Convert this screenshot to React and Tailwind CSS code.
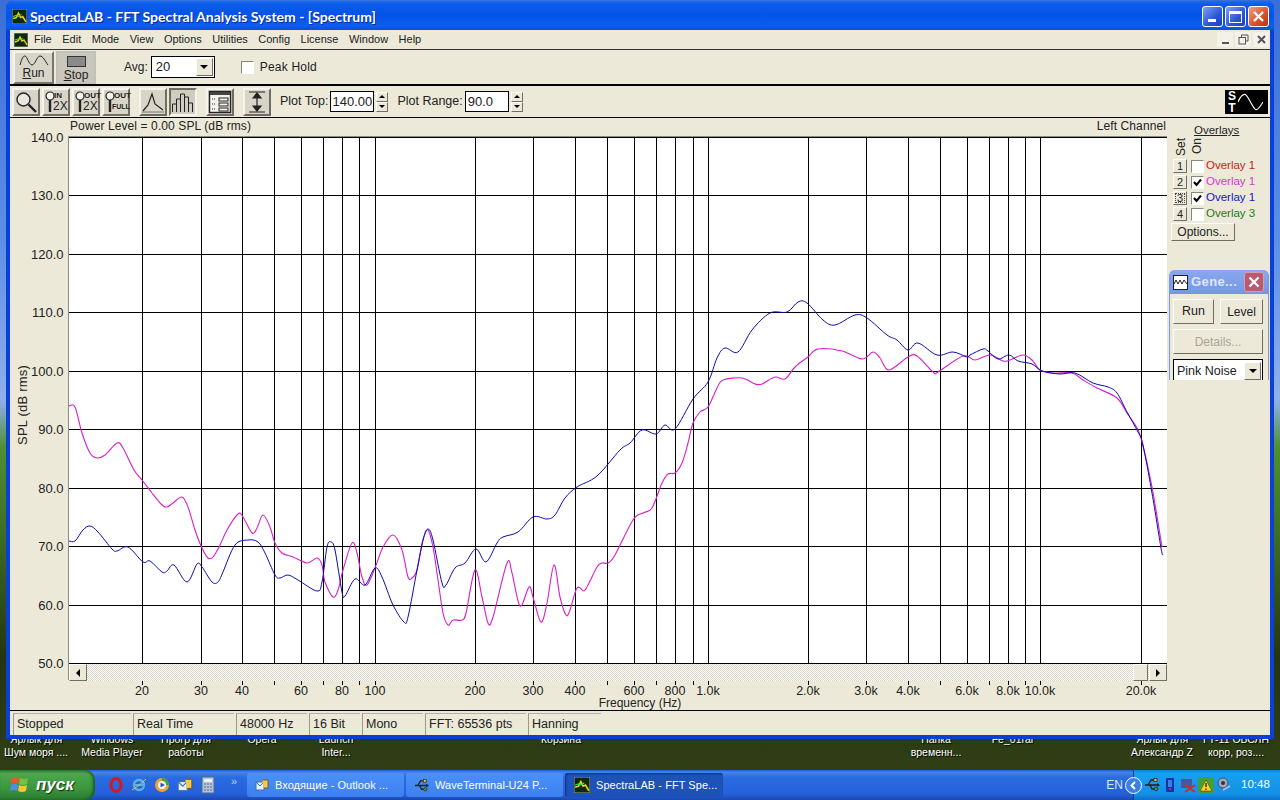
import React from "react";

const raised = "border border-t-white border-l-white border-r-[#716f64] border-b-[#716f64] bg-[#ece9d8]";
const toolBtn = "flex items-center justify-center w-[28px] h-[28px] border-2 border-t-[#f5f4ec] border-l-[#f5f4ec] border-r-[#6f6d62] border-b-[#6f6d62] bg-[#d8d5c8]";
const sunken = "border border-t-[#8a877a] border-l-[#8a877a] border-r-white border-b-white";

const magenta = [[69,406],[75,407],[82,433],[90,453],[97,458],[105,455],[117,443],[123,448],[134,470],[142,480],[152,493],[162,505],[167,507],[173,503],[182,497],[188,507],[195,530],[202,548],[208,558],[213,557],[220,545],[227,530],[238,514],[243,517],[252,533],[257,528],[263,515],[270,527],[275,543],[282,553],[293,557],[307,563],[317,558],[322,565],[325,582],[333,597],[338,590],[343,570],[352,543],[357,553],[362,577],[367,585],[375,568],[383,547],[393,535],[402,550],[408,577],[412,578],[417,570],[423,540],[428,530],[433,547],[438,580],[443,613],[448,625],[453,620],[462,620],[466,613],[475,570],[482,597],[488,623],[493,617],[507,563],[512,573],[520,606],[529,587],[533,597],[541,622],[547,603],[554,565],[560,597],[566,615],[570,610],[577,588],[584,591],[588,585],[597,567],[602,563],[608,563],[615,555],[633,520],[643,513],[652,508],[662,483],[668,474],[675,473],[682,463],[688,443],[693,423],[700,412],[708,407],[717,388],[723,380],[742,378],[755,384],[762,384],[775,377],[785,379],[795,367],[808,357],[818,349],[842,351],[862,359],[873,352],[880,358],[889,370],[908,357],[917,356],[933,372],[938,372],[963,356],[975,360],[990,355],[1003,361],[1010,360],[1023,355],[1032,360],[1040,370],[1053,373],[1072,373],[1083,380],[1097,388],[1117,398],[1127,413],[1137,428],[1142,442],[1152,487],[1162,547]];

const blue = [[69,541],[75,541],[83,530],[90,526],[98,532],[112,549],[117,551],[128,547],[143,562],[150,561],[162,572],[167,571],[174,565],[187,582],[197,564],[202,567],[212,582],[218,582],[223,572],[235,545],[248,540],[258,542],[265,553],[275,575],[280,578],[288,575],[298,580],[317,591],[322,582],[327,547],[331,542],[335,550],[342,592],[345,596],[355,579],[365,585],[375,568],[382,577],[393,605],[404,622],[408,617],[417,570],[423,540],[428,529],[433,540],[442,583],[446,585],[455,568],[465,563],[476,549],[486,562],[497,543],[503,537],[518,532],[533,517],[547,519],[555,515],[565,498],[577,487],[597,476],[620,450],[630,443],[642,430],[656,434],[665,425],[675,429],[693,399],[708,382],[717,358],[725,348],[738,352],[752,330],[770,313],[787,312],[798,302],[807,303],[823,320],[835,325],[855,315],[867,318],[887,335],[897,340],[908,350],[918,343],[937,355],[953,352],[967,357],[970,355],[983,349],[988,351],[998,359],[1009,355],[1018,361],[1032,364],[1042,371],[1060,374],[1075,373],[1093,383],[1108,387],[1117,393],[1127,412],[1138,432],[1143,445],[1152,493],[1161,548],[1163,555]];

const gridX = [142,201,242,274,301,323,342,359,375,475,533,575,607,634,656,675,693,708,808,866,908,940,967,989,1008,1025,1040,1141];
const gridY = [137,195,254,312,371,429,488,546,605,663];
const yLabels = ["140.0","130.0","120.0","110.0","100.0","90.0","80.0","70.0","60.0","50.0"];
const xLabels = [[142,"20"],[201,"30"],[242,"40"],[301,"60"],[342,"80"],[375,"100"],[475,"200"],[533,"300"],[575,"400"],[634,"600"],[675,"800"],[708,"1.0k"],[808,"2.0k"],[866,"3.0k"],[908,"4.0k"],[967,"6.0k"],[1008,"8.0k"],[1040,"10.0k"],[1141,"20.0k"]];

const smooth = (pts) => {
  let d = `M${pts[0][0]} ${pts[0][1]}`;
  for (let i = 0; i < pts.length - 1; i++) {
    const p0 = pts[i - 1] || pts[i];
    const p1 = pts[i];
    const p2 = pts[i + 1];
    const p3 = pts[i + 2] || p2;
    const c1x = p1[0] + (p2[0] - p0[0]) / 6;
    const c1y = p1[1] + (p2[1] - p0[1]) / 6;
    const c2x = p2[0] - (p3[0] - p1[0]) / 6;
    const c2y = p2[1] - (p3[1] - p1[1]) / 6;
    d += ` C${c1x.toFixed(1)} ${c1y.toFixed(1)} ${c2x.toFixed(1)} ${c2y.toFixed(1)} ${p2[0]} ${p2[1]}`;
  }
  return d;
};

const AppIcon = ({ size = 14 }) => (
  <svg width={size} height={size} viewBox="0 0 14 14" className="shrink-0">
    <rect width="14" height="14" fill="#0c2a12" stroke="#8a9a80" />
    <path d="M1 9 L4 8 L6 4 L8 8 L10 7 L13 12" fill="none" stroke="#f0d020" strokeWidth="1.4" />
    <path d="M1 7 L4 6 L6 7 L9 5" fill="none" stroke="#30e050" strokeWidth="1" />
  </svg>
);

const TitleButtons = () => (
  <div className="flex items-center gap-[2px] pr-[5px]">
    <div className="w-[21px] h-[21px] rounded-[3px] border border-white bg-[linear-gradient(135deg,#7ea4f4,#2a55d8_60%,#1c3fc0)] flex items-end pl-[5px] pb-[4px]">
      <div className="w-[8px] h-[3px] bg-white" />
    </div>
    <div className="w-[21px] h-[21px] rounded-[3px] border border-white bg-[linear-gradient(135deg,#7ea4f4,#2a55d8_60%,#1c3fc0)] flex items-center justify-center">
      <div className="w-[13px] h-[12px] border border-white border-t-[3px]" />
    </div>
    <div className="w-[21px] h-[21px] rounded-[3px] border border-white bg-[linear-gradient(135deg,#f0a080,#d8502a_60%,#b83010)] flex items-center justify-center">
      <svg width="13" height="13" viewBox="0 0 13 13"><path d="M2 2 L11 11 M11 2 L2 11" stroke="#fff" strokeWidth="2.4" /></svg>
    </div>
  </div>
);

const Magnifier = () => (
  <svg width="24" height="24" viewBox="0 0 24 24" fill="none">
    <circle cx="9.5" cy="9.5" r="6.5" stroke="#222" strokeWidth="1.4" fill="#e8e8e0" />
    <path d="M14.5 14.5 L22 22" stroke="#222" strokeWidth="2.4" />
  </svg>
);

const ZoomIcon = ({ top, bottom }) => (
  <div className="relative w-[24px] h-[24px]">
    <svg width="24" height="24" viewBox="0 0 24 24" fill="none" className="absolute left-0 top-0">
      <circle cx="6" cy="6" r="4" stroke="#222" strokeWidth="1.2" fill="#f4f4ec" />
      <path d="M6 10 L6 22" stroke="#222" strokeWidth="2.4" />
    </svg>
    <span className="absolute left-[10px] top-[1px] text-[8px] leading-[9px] font-bold text-[#222]">{top}</span>
    <span className={bottom === "FULL" ? "absolute left-[8px] top-[12px] text-[7px] leading-[10px] font-bold text-[#222]" : "absolute left-[9px] top-[10px] text-[12px] leading-[13px] text-[#222]"}>{bottom}</span>
  </div>
);

const PeakIcon = () => (
  <svg width="22" height="22" viewBox="0 0 22 22" fill="none">
    <path d="M1 20 L6 14 L10 3 L13 13 L21 19" stroke="#222" strokeWidth="1.2" />
    <path d="M0 21 H22" stroke="#777" />
  </svg>
);

const BarsIcon = () => (
  <svg width="24" height="22" viewBox="0 0 24 22" fill="none" stroke="#222" strokeWidth="1">
    <path d="M1.5 21 V13 H5.5 V21 M5.5 21 V8 H9.5 V21 M9.5 21 V3 H13.5 V21 M13.5 21 V6 H17.5 V21 M17.5 21 V12 H21.5 V21" />
  </svg>
);

const PanelIcon = () => (
  <svg width="24" height="24" viewBox="0 0 24 24" fill="none" stroke="#222">
    <rect x="1.5" y="1.5" width="21" height="21" fill="#f4f4ec" strokeWidth="1.4" />
    <rect x="2" y="2" width="20" height="3" fill="#444" stroke="none" />
    <rect x="11" y="8" width="9" height="3" />
    <rect x="11" y="13" width="9" height="3" />
    <rect x="11" y="18" width="9" height="3" />
    <path d="M4 9 H8 M4 14 H8 M4 19 H8" strokeDasharray="1 1" />
  </svg>
);

const RangeIcon = () => (
  <svg width="24" height="24" viewBox="0 0 24 24" fill="none" stroke="#222" strokeWidth="1.2">
    <path d="M4 2 H20 M4 22 H20 M12 3 V21" />
    <path d="M8 8 L12 3 L16 8 Z M8 16 L12 21 L16 16 Z" fill="#222" />
  </svg>
);

const Spinner = () => (
  <div className="flex flex-col w-[12px] h-[20px]">
    <div className={`${raised} flex-1 flex items-center justify-center`}><div className="border-x-[3px] border-x-transparent border-b-[3px] border-b-black" /></div>
    <div className={`${raised} flex-1 flex items-center justify-center`}><div className="border-x-[3px] border-x-transparent border-t-[3px] border-t-black" /></div>
  </div>
);

const DropBtn = ({ h = "h-[18px]" }) => (
  <div className={`${raised} ${h} w-[17px] flex items-center justify-center shrink-0`}>
    <div className="border-x-[4px] border-x-transparent border-t-[4px] border-t-black" />
  </div>
);

const Check = ({ checked }) => (
  <div className={`w-[13px] h-[13px] bg-white ${sunken} flex items-center justify-center`}>
    {checked && <svg width="9" height="9" viewBox="0 0 9 9"><path d="M1 4 L3.5 7 L8 1.5" fill="none" stroke="#000" strokeWidth="2" /></svg>}
  </div>
);

const Chart = () => (
  <svg width="1158" height="574" className="block overflow-visible">
    <g transform="translate(-10,-136)" fontFamily="'Liberation Sans', Arial, sans-serif" fontSize="13" fill="#222">
      <rect x="69" y="137" width="1098" height="526" fill="#fff" />
      <path d="M68.5 137 V680 M68 136.5 H1167" stroke="#8e8c80" strokeWidth="1.5" shapeRendering="crispEdges" />
      {gridX.map((x) => (
        <line key={x} x1={x + 0.5} x2={x + 0.5} y1="137" y2="663" stroke="#000" shapeRendering="crispEdges" />
      ))}
      {gridY.map((y) => (
        <line key={y} x1="69" x2="1167" y1={y + 0.5} y2={y + 0.5} stroke="#000" shapeRendering="crispEdges" />
      ))}
      {gridX.map((x) => (
        <line key={x} x1={x + 0.5} x2={x + 0.5} y1="680" y2="685" stroke="#000" shapeRendering="crispEdges" />
      ))}
      <path d={smooth(magenta)} fill="none" stroke="#d81fc8" strokeWidth="1.1" />
      <path d={smooth(blue)} fill="none" stroke="#0a0ab0" strokeWidth="1" />
      {yLabels.map((t, i) => (
        <text key={t} x="63.5" y={gridY[i] + 5} textAnchor="end">{t}</text>
      ))}
      {xLabels.map(([x, t]) => (
        <text key={t} x={x} y="695" textAnchor="middle" fontSize="12.5">{t}</text>
      ))}
      <text x="640" y="707" textAnchor="middle" fontSize="12">Frequency (Hz)</text>
      <text transform="translate(27,405) rotate(-90)" textAnchor="middle" letterSpacing="0.2">SPL (dB rms)</text>
    </g>
  </svg>
);

const Status = ({ w, children }) => (
  <div className={`${w} h-[22px] border-l border-t border-l-[#9c998a] border-t-[#b4b1a2] pl-[3px] text-[12.5px] leading-[20px] text-[#222] truncate`}>{children}</div>
);

const DesktopLabel = ({ left, top, children }) => (
  <div className="absolute -translate-x-1/2 text-[10.5px] leading-[14px] text-white whitespace-nowrap [text-shadow:1px_1px_1px_#000]" style={{ left, top }}>{children}</div>
);

const TaskBtn = ({ active, icon, children }) => (
  <div className={active
    ? "w-[158px] h-[24px] rounded-[3px] bg-[#1e52b7] shadow-[inset_1px_1px_2px_#0f2f80] flex items-center gap-[6px] pl-[9px] text-[11px] tracking-[0.05px] text-white whitespace-nowrap"
    : "w-[157px] h-[24px] rounded-[3px] bg-[linear-gradient(#4a90f8,#3c80f0)] flex items-center gap-[6px] pl-[8px] text-[11px] tracking-[0.05px] text-white whitespace-nowrap"}>
    {icon}
    <span>{children}</span>
  </div>
);

const MailIcon = ({ size = 14 }) => (
  <svg width={size} height={size} viewBox="0 0 14 14">
    <rect x="1" y="4" width="8" height="8" fill="#e8f0fa" stroke="#4070b0" />
    <path d="M1 4 L5 8 L9 4" fill="none" stroke="#4070b0" />
    <path d="M7 2 H13 V10 H9" fill="#f4c84a" stroke="#705010" strokeWidth=".8" />
  </svg>
);

const UsbIcon = ({ size = 16 }) => (
  <svg width={size} height={size} viewBox="0 0 16 16" fill="none">
    <path d="M1 8 H14" stroke="#222" strokeWidth="1.6" />
    <path d="M4 8 L7 3 H10 M6 8 L8 12 H11" stroke="#222" strokeWidth="1.4" />
    <rect x="10" y="1.5" width="3" height="3" fill="#e8c030" stroke="#222" strokeWidth=".7" />
    <circle cx="12" cy="12" r="1.8" fill="#30a040" stroke="#222" strokeWidth=".7" />
    <path d="M13 6 L16 8 L13 10 Z" fill="#222" />
  </svg>
);

const App = () => {
  return (
    <div className="relative w-[1280px] h-[800px] overflow-hidden font-['Liberation_Sans',Arial,sans-serif] bg-[linear-gradient(#3a6ed8_0%,#5d8fe6_30%,#8fb0ea_50%,#4f8f30_56%,#3b6a22_68%,#25350f_82%,#2f3e15_96%)]">
      {/* desktop icons, mostly hidden by the window */}
      <DesktopLabel left={36} top={732}>Ярлык для</DesktopLabel>
      <DesktopLabel left={36} top={745}>Шум моря ....</DesktopLabel>
      <DesktopLabel left={112} top={732}>Windows</DesktopLabel>
      <DesktopLabel left={112} top={745}>Media Player</DesktopLabel>
      <DesktopLabel left={186} top={732}>Прогр для</DesktopLabel>
      <DesktopLabel left={186} top={745}>работы</DesktopLabel>
      <DesktopLabel left={262} top={732}>Opera</DesktopLabel>
      <DesktopLabel left={336} top={732}>Launch</DesktopLabel>
      <DesktopLabel left={336} top={745}>Inter...</DesktopLabel>
      <DesktopLabel left={561} top={732}>Корзина</DesktopLabel>
      <DesktopLabel left={936} top={732}>Папка</DesktopLabel>
      <DesktopLabel left={936} top={745}>временн...</DesktopLabel>
      <DesktopLabel left={1013} top={732}>Fe_01rar</DesktopLabel>
      <DesktopLabel left={1162} top={732}>Ярлык для</DesktopLabel>
      <DesktopLabel left={1162} top={745}>Александр Z</DesktopLabel>
      <DesktopLabel left={1236} top={732}>ГТ-11 ОБСЛН</DesktopLabel>
      <DesktopLabel left={1236} top={745}>корр, роз....</DesktopLabel>

      {/* main window */}
      <div className="absolute left-[6px] top-[1px] w-[1268px] h-[738px] flex flex-col rounded-t-[7px] bg-[#0a3fd8] px-[4px] pb-[4px]">
        <div className="h-[29px] -mx-[4px] pt-[2px] rounded-t-[7px] shrink-0 flex items-center justify-between pl-[6px] bg-[linear-gradient(#1a6df0,#0a5cec_12%,#0552e8_50%,#0a5fee_85%,#0a4fd8)]">
          <div className="flex items-center gap-[3px]">
            <AppIcon size={15} />
            <span className="text-white font-['Lato',sans-serif] font-bold text-[14px] leading-none [text-shadow:1px_1px_0_#0a2a90]">SpectraLAB - FFT Spectral Analysis System - [Spectrum]</span>
          </div>
          <TitleButtons />
        </div>

        <div className="flex-1 flex flex-col bg-[#ece9d8] min-h-0 text-[#222]">
          {/* menu */}
          <div className="h-[20px] shrink-0 flex items-center justify-between border-b border-b-[#333] pl-[4px]">
            <div className="flex items-center text-[11px]">
              <AppIcon />
              <div className="flex gap-[10.5px] ml-[6px]">
                {["File","Edit","Mode","View","Options","Utilities","Config","License","Window","Help"].map((m) => <span key={m}>{m}</span>)}
              </div>
            </div>
            <div className="flex items-center gap-[2px] pr-[1px] text-[#555]">
              <div className="w-[16px] h-[15px] bg-[#f4f2e8] flex items-end justify-center pb-[3px]"><div className="w-[7px] h-[2px] bg-[#555]" /></div>
              <div className="w-[16px] h-[15px] bg-[#f4f2e8] flex items-center justify-center"><svg width="11" height="11" viewBox="0 0 11 11" fill="none" stroke="#555"><rect x="1" y="3.5" width="6.5" height="6.5" /><path d="M3.5 3 V1 H10 V7 H8" /></svg></div>
              <div className="w-[16px] h-[15px] bg-[#f4f2e8] flex items-center justify-center"><svg width="9" height="9" viewBox="0 0 9 9"><path d="M1 1 L8 8 M8 1 L1 8" stroke="#555" strokeWidth="2" /></svg></div>
            </div>
          </div>

          {/* run/stop row */}
          <div className="h-[36px] shrink-0 flex items-center border-b-2 border-b-black pl-[3px]">
            <div className="w-[41px] h-[33px] border-2 border-t-[#f5f4ec] border-l-[#f5f4ec] border-r-[#77756a] border-b-[#77756a] bg-[#d8d5c8] flex flex-col items-center text-[12px] leading-[12px] pt-[2px]">
              <svg width="30" height="12" viewBox="0 0 30 12" fill="none"><path d="M1 10 C3 3 4 1 6 1 S10 10 13 10 S18 1 21 1 S26 6 29 10" stroke="#222" /></svg>
              <span><u>R</u>un</span>
            </div>
            <div className="w-[40px] h-[33px] ml-[2px] border-2 border-[#c4c2b8] bg-[#c9c7bb] flex flex-col items-center text-[12px] leading-[12px] pt-[3px]">
              <div className="w-[19px] h-[11px] bg-[#8a8a8a] border border-[#333] mb-[2px]" />
              <span><u>S</u>top</span>
            </div>
            <span className="ml-[28px] text-[12px]">Avg:</span>
            <div className="ml-[3px] w-[64px] h-[22px] bg-white border border-black flex items-center justify-between pr-[1px] pl-[4px] text-[13px]">
              20
              <DropBtn />
            </div>
            <div className="ml-[26px]"><Check /></div>
            <span className="ml-[6px] text-[12px] tracking-[0.2px]">Peak Hold</span>
          </div>

          {/* plot tools row */}
          <div className="h-[32px] shrink-0 flex items-center border-b border-b-black pl-[2px] pr-[2px]">
            <div className={toolBtn}><Magnifier /></div>
            <div className={`${toolBtn} ml-[2px]`}><ZoomIcon top="IN" bottom="2X" /></div>
            <div className={`${toolBtn} ml-[2px]`}><ZoomIcon top="OUT" bottom="2X" /></div>
            <div className={`${toolBtn} ml-[2px]`}><ZoomIcon top="OUT" bottom="FULL" /></div>
            <div className={`${toolBtn} ml-[9px]`}><PeakIcon /></div>
            <div className={`${toolBtn} ml-[2px] !bg-[#cfccc0] !border-t-[#6f6d62] !border-l-[#6f6d62] !border-r-[#f5f4ec] !border-b-[#f5f4ec]`}><BarsIcon /></div>
            <div className={`${toolBtn} ml-[9px]`}><PanelIcon /></div>
            <div className={`${toolBtn} ml-[9px]`}><RangeIcon /></div>
            <span className="ml-[9px] text-[12.5px] whitespace-nowrap">Plot Top:</span>
            <div className="ml-[2px] w-[44px] h-[21px] bg-white border border-black text-[13px] leading-[19px] text-center">140.00</div>
            <div className="ml-[2px]"><Spinner /></div>
            <span className="ml-[9px] text-[12.5px] whitespace-nowrap">Plot Range:</span>
            <div className="ml-[2px] w-[44px] h-[21px] bg-white border border-black text-[13px] leading-[19px] pl-[2px]">90.0</div>
            <div className="ml-[2px]"><Spinner /></div>
            <div className="ml-auto w-[43px] h-[24px] bg-black flex items-center pl-[3px] gap-[2px]">
              <div className="flex flex-col items-center text-white font-bold text-[12px] leading-[12px]"><span>S</span><span>T</span></div>
              <svg width="25" height="20" viewBox="0 0 26 20" fill="none"><path d="M0 10 C3 3 5 2 7 2 S10 5 13 10 S17 18 19 18 S23 15 26 10" stroke="#fff" strokeWidth="1.2" /></svg>
            </div>
          </div>

          {/* plot and side panel */}
          <div className="flex-1 flex min-h-0">
            <div className="w-[1158px] shrink-0 flex flex-col relative">
              <div className="h-[18px] shrink-0 flex items-end justify-between pl-[60px] pr-[2px] pb-[3px] text-[12px] leading-[14px] tracking-[0.1px]">
                <span>Power Level = 0.00 SPL (dB rms)</span>
                <span>Left Channel</span>
              </div>
              <Chart />
              <div className="absolute left-[59px] top-[546px] w-[1098px] h-[17px] flex bg-[repeating-conic-gradient(#d9d6c8_0%_25%,#ffffff_0%_50%)] bg-size-[2px_2px]">
                <div className={`${raised} w-[18px] h-[17px] flex items-center justify-center`}><div className="border-y-[4px] border-y-transparent border-r-[4px] border-r-black" /></div>
                <div className={`${raised} ml-auto w-[15px] h-[17px]`} />
                <div className={`${raised} ml-[1px] w-[18px] h-[17px] flex items-center justify-center`}><div className="border-y-[4px] border-y-transparent border-l-[4px] border-l-black" /></div>
              </div>
            </div>

            <div className="flex-1 flex flex-col pl-[1px]">
              <div className="relative h-[60px] shrink-0">
                <div className="absolute left-[25px] top-[5px] text-[11.5px] leading-[14px] underline">Overlays</div>
                <div className="absolute left-[5px] top-[20px] [writing-mode:vertical-rl] rotate-180 text-[12px] leading-[14px]">Set</div>
                <div className="absolute left-[21px] top-[20px] [writing-mode:vertical-rl] rotate-180 text-[12px] leading-[14px]">On</div>
              </div>
              <div className="flex flex-col gap-[2px] -mt-[19px] pl-[4px]">
                {[["1",false,"text-[#d01818]","Overlay 1"],["2",true,"text-[#e030e0]","Overlay 1"],["3",true,"text-[#1414c8]","Overlay 1"],["4",false,"text-[#1a7a1a]","Overlay 3"]].map(([n, on, color, name]) => (
                  <div key={n} className="h-[14px] flex items-center">
                    <div className={`${raised} w-[14px] h-[14px] flex items-center justify-center text-[11px] leading-none ${n === "3" ? "outline-1 outline-dotted -outline-offset-3 outline-[#444]" : ""}`}>{n}</div>
                    <div className="ml-[4px]"><Check checked={on} /></div>
                    <span className={`ml-[2px] text-[11.5px] whitespace-nowrap ${color}`}>{name}</span>
                  </div>
                ))}
              </div>
              <div className={`${raised} ml-[2px] mt-[2px] w-[64px] h-[18px] text-[12px] leading-[16px] text-center`}>Options...</div>

              {/* generator tool window */}
              <div className="mt-[29px] w-[100px] h-[110px] flex flex-col rounded-t-[6px] bg-[#7b97e0] px-[1px] overflow-hidden">
                <div className="h-[24px] shrink-0 flex items-center pl-[3px] pr-[4px] bg-[linear-gradient(#8aa8ee,#7596e4)]">
                  <div className="w-[15px] h-[15px] bg-white border border-[#223] flex items-center justify-center">
                    <svg width="13" height="9" viewBox="0 0 13 9" fill="none"><path d="M0 6 L2 2 L4 6 L6 2 L8 6 L10 2 L13 6" stroke="#222" /></svg>
                  </div>
                  <span className="ml-[3px] text-[#dfe8ff] font-bold text-[13px] tracking-[0.4px]">Gene...</span>
                  <div className="ml-auto w-[20px] h-[20px] rounded-[3px] bg-[#b85a70] border border-[#d0a0b0] flex items-center justify-center">
                    <svg width="12" height="12" viewBox="0 0 12 12"><path d="M1.5 1.5 L10.5 10.5 M10.5 1.5 L1.5 10.5" stroke="#fff" strokeWidth="2.2" /></svg>
                  </div>
                </div>
                <div className="flex-1 bg-[#ece9d8] pt-[5px] px-[3px] flex flex-col gap-[5px] text-[12.5px]">
                  <div className="w-[90px] flex justify-between">
                    <div className={`${raised} w-[41px] h-[25px] flex items-center justify-center`}>Run</div>
                    <div className={`${raised} w-[43px] h-[25px] flex items-center justify-center text-[12px]`}>Level</div>
                  </div>
                  <div className={`${raised} w-[90px] h-[25px] flex items-center justify-center text-[12px] text-[#a8a698]`}>Details...</div>
                  <div className="w-[90px] h-[24px] bg-white border-x border-t border-black flex items-start justify-between pt-[2px] pl-[3px] pr-[1px]">
                    Pink Noise
                    <DropBtn />
                  </div>
                </div>
              </div>
            </div>
          </div>

          {/* status bar */}
          <div className="h-[25px] shrink-0 border-t border-t-black flex items-start pt-[2px] pl-[3px]">
            <Status w="w-[118px] mr-[2px]">Stopped</Status>
            <Status w="w-[101px] mr-[2px]">Real Time</Status>
            <Status w="w-[71px] mr-[2px]">48000 Hz</Status>
            <Status w="w-[51px] mr-[2px]">16 Bit</Status>
            <Status w="w-[61px] mr-[2px]">Mono</Status>
            <Status w="w-[101px] mr-[2px]">FFT: 65536 pts</Status>
            <Status w="w-[73px]">Hanning</Status>
          </div>
        </div>
      </div>

      {/* taskbar */}
      <div className="absolute left-0 bottom-0 w-[1280px] h-[30px] flex items-center text-white bg-[linear-gradient(#1f5fd8,#3e86ec_8%,#2a6be0_25%,#2560da_80%,#1a48b0)]">
        <div className="w-[95px] h-[30px] shrink-0 rounded-r-[10px] flex items-center pl-[10px] gap-[6px] bg-[linear-gradient(#2f8a35,#4aa84c_12%,#3c963f_60%,#2a7a30)] shadow-[inset_-2px_0_3px_#1a5a20]">
          <svg width="20" height="18" viewBox="0 0 20 18">
            <path d="M1 3 Q5 0 9 2 L8 8 Q4 6 1 8 Z" fill="#e8582a" />
            <path d="M10 2 Q14 4 18 2 L17 8 Q13 10 9 8 Z" fill="#7ac040" />
            <path d="M1 9 Q4 7 8 9 L7 15 Q4 13 0 15 Z" fill="#4a90e8" />
            <path d="M9 9 Q13 11 17 9 L16 15 Q12 17 8 15 Z" fill="#f4c830" />
          </svg>
          <span className="italic font-bold text-[17px] [text-shadow:1px_1px_1px_#103810]">пуск</span>
        </div>
        <div className="flex items-center w-[152px] shrink-0 pl-[13px] gap-[7px]">
          <svg width="16" height="16" viewBox="0 0 16 16"><ellipse cx="8" cy="8" rx="5" ry="6.5" fill="none" stroke="#d81818" strokeWidth="3" /></svg>
          <svg width="16" height="16" viewBox="0 0 16 16" fill="none"><circle cx="8" cy="8" r="5" stroke="#58b0f0" strokeWidth="2.4" /><path d="M3 8 H13" stroke="#58b0f0" strokeWidth="2" /><path d="M1 13 Q8 9 15 2" stroke="#e0c040" /></svg>
          <svg width="16" height="16" viewBox="0 0 16 16"><circle cx="8" cy="8" r="7" fill="#f0a030" /><path d="M8 1 A7 7 0 0 1 15 8 H8 Z" fill="#40a040" /><circle cx="8" cy="8" r="4" fill="#fff" /><path d="M6.5 5.5 L11 8 L6.5 10.5 Z" fill="#3050b0" /></svg>
          <MailIcon size={16} />
          <svg width="16" height="18" viewBox="0 0 16 18"><rect x="2" y="1" width="12" height="16" fill="#b8c4dc" stroke="#506890" /><rect x="4" y="3" width="8" height="3" fill="#e8f0f8" /><path d="M4 8 H12 M4 11 H12 M4 14 H12" stroke="#506890" strokeDasharray="2 1" /></svg>
          <span className="ml-[8px] text-[11px] leading-none text-[#bcd4f8] -mt-[8px]">»</span>
        </div>
        <div className="flex gap-[2px]">
          <TaskBtn icon={<MailIcon />}>Входящие - Outlook ...</TaskBtn>
          <TaskBtn icon={<UsbIcon size={15} />}>WaveTerminal-U24 P...</TaskBtn>
          <TaskBtn active icon={<AppIcon size={16} />}>SpectraLAB - FFT Spe...</TaskBtn>
        </div>
        <span className="ml-auto mr-[10px] text-[12px] text-[#d8e8ff]">EN</span>
        <div className="h-[30px] w-[147px] shrink-0 relative flex items-center pl-[10px] gap-[2px] bg-[linear-gradient(#0c80dc,#18a0f0_10%,#1490e8_80%,#0d70c8)] border-l border-l-[#0a3a90]">
          <div className="absolute -left-[9px] top-[7px] w-[17px] h-[17px] rounded-full bg-[#3a80e8] border border-white flex items-center justify-center">
            <svg width="9" height="9" viewBox="0 0 9 9" fill="none"><path d="M6 1 L2.5 4.5 L6 8" stroke="#fff" strokeWidth="2" /></svg>
          </div>
          <UsbIcon size={16} />
          <svg width="16" height="18" viewBox="0 0 16 18"><rect x="4" y="2" width="8" height="14" rx="1" fill="#1830a8" /><rect x="6" y="4" width="4" height="7" fill="#3880e8" /><circle cx="8" cy="13" r="1" fill="#e04040" /></svg>
          <svg width="16" height="16" viewBox="0 0 16 16"><rect x="1" y="2" width="11" height="9" fill="#4858a0" /><path d="M5 8 L15 15 M15 8 L5 15" stroke="#d82828" strokeWidth="2" /></svg>
          <svg width="16" height="16" viewBox="0 0 16 16"><rect x="0" y="0" width="16" height="16" rx="3" fill="#40a040" /><path d="M8 3 L14 14 H2 Z" fill="#f8d020" stroke="#604000" strokeWidth=".6" /><path d="M8 6 V10 M8 11.5 V13" stroke="#201000" strokeWidth="1.2" /></svg>
          <svg width="16" height="16" viewBox="0 0 16 16"><circle cx="7" cy="6" r="5" fill="#a0a8b8" stroke="#405068" /><circle cx="7" cy="6" r="2" fill="#2c3448" /><path d="M7 13 L14 9" stroke="#b0c0e0" strokeWidth="1.6" /></svg>
          <span className="ml-[7px] text-[11.5px] text-white">10:48</span>
        </div>
      </div>
    </div>
  );
};

export default App;
